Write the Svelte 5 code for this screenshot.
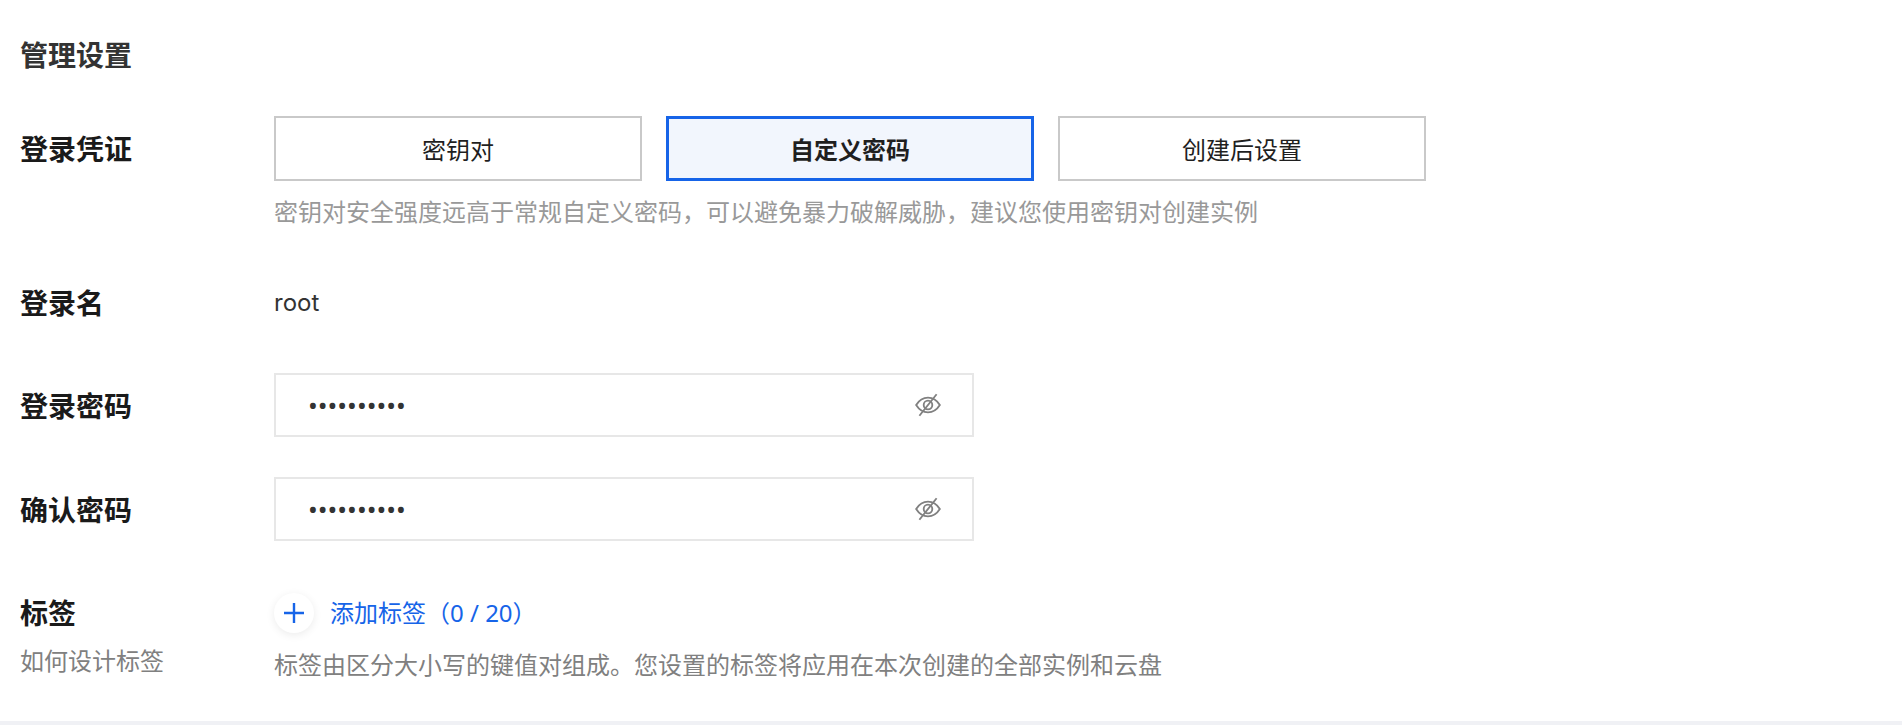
<script lang="ts">
	const credentials = ['密钥对', '自定义密码', '创建后设置'];
	let selected = $state(1);
	let passwords = $state(['1234567890', '1234567890']);
	const passwordRows = ['登录密码', '确认密码'];
</script>

<div class="page">
	<section class="panel">
		<h2 class="title">管理设置</h2>

		<div class="row row-credential">
			<div class="label">登录凭证</div>
			<div class="field">
				<div class="options">
					{#each credentials as option, i}
						<button class="option" class:active={selected === i} onclick={() => (selected = i)}>{option}</button>
					{/each}
				</div>
				<p class="hint">密钥对安全强度远高于常规自定义密码，可以避免暴力破解威胁，建议您使用密钥对创建实例</p>
			</div>
		</div>

		<div class="row row-name">
			<div class="label">登录名</div>
			<div class="field value">root</div>
		</div>

		{#each passwordRows as label, i}
			<div class="row row-password">
				<div class="label">{label}</div>
				<div class="field">
					<div class="input-box">
						<input type="password" bind:value={passwords[i]} aria-label={label} />
						<svg class="eye" width="28" height="28" viewBox="0 0 26 26" fill="none" stroke="currentColor" stroke-width="1.7">
							<path d="M2 13 C5 8.2 8.8 6.2 13 6.2 C17.2 6.2 21 8.2 24 13 C21 17.8 17.2 19.8 13 19.8 C8.8 19.8 5 17.8 2 13 Z" />
							<circle cx="13" cy="13" r="4" />
							<path d="M21 3 L5 23" />
						</svg>
					</div>
				</div>
			</div>
		{/each}

		<div class="row row-tags">
			<div class="label-stack">
				<div class="label">标签</div>
				<div class="label-link">如何设计标签</div>
			</div>
			<div class="field">
				<div class="add-tag">
					<span class="plus">
						<svg width="24" height="24" viewBox="0 0 24 24" fill="none" stroke="currentColor" stroke-width="2.4">
							<path d="M12 2 V22 M2 12 H22" />
						</svg>
					</span>
					<span class="add-text">添加标签（0 / 20）</span>
				</div>
				<p class="hint hint-tags">标签由区分大小写的键值对组成。您设置的标签将应用在本次创建的全部实例和云盘</p>
			</div>
		</div>
	</section>
	<div class="strip"></div>
</div>

<style>
	:global(body) {
		background: #fff;
	}

	.page {
		height: 725px;
		display: flex;
		flex-direction: column;
		overflow: hidden;
		font-family: 'Noto Sans', 'Noto Sans CJK SC', sans-serif;
		font-size: 24px;
		color: #1f1f1f;
	}

	.panel {
		flex: 1;
		padding: 35px 20px 0;
	}

	.strip {
		height: 4px;
		background: #f0f1f5;
	}

	.title {
		margin: 0;
		font-size: 28px;
		line-height: 40px;
		font-weight: 700;
		color: #333;
	}

	.row {
		display: flex;
	}

	.row-credential {
		margin-top: 41px;
	}

	.row-name {
		margin-top: 55px;
	}

	.row-password {
		margin-top: 40px;
	}

	.row-name + .row-password {
		margin-top: 50px;
	}

	.row-tags {
		margin-top: 52px;
	}

	.label {
		font-size: 28px;
		line-height: 40px;
		font-weight: 700;
		color: #1a1a1a;
	}

	.row > .label {
		width: 254px;
		flex-shrink: 0;
		padding-top: 13px;
	}

	.row-name > .label {
		padding-top: 0;
	}

	.label-stack {
		width: 254px;
		flex-shrink: 0;
	}

	.label-link {
		margin-top: 10px;
		line-height: 36px;
		color: #808080;
	}

	.options {
		display: flex;
		gap: 24px;
	}

	.option {
		width: 368px;
		height: 65px;
		box-sizing: border-box;
		padding: 0;
		background: #fff;
		border: 2px solid #c9c9c9;
		font: inherit;
		color: #1f1f1f;
		cursor: pointer;
	}

	.option.active {
		border: 3px solid #1664e8;
		background: #f2f6fd;
		font-weight: 700;
	}

	.hint {
		margin: 15px 0 0;
		line-height: 32px;
		color: #999;
	}

	.hint-tags {
		margin-top: 16px;
		color: #808080;
	}

	.value {
		line-height: 40px;
		font-family: Inter, sans-serif;
		color: #333;
	}

	.input-box {
		width: 700px;
		height: 64px;
		box-sizing: border-box;
		display: flex;
		align-items: center;
		padding: 0 30px 0 32px;
		border: 2px solid #e7e7e7;
		background: #fff;
	}

	.input-box input {
		flex: 1;
		min-width: 0;
		border: none;
		outline: none;
		padding: 0;
		background: transparent;
		font: inherit;
		font-size: 26px;
		color: #333;
	}

	.eye {
		color: #808080;
		flex-shrink: 0;
	}

	.add-tag {
		display: flex;
		align-items: center;
		gap: 16px;
		height: 40px;
		color: #1664e8;
	}

	.add-text {
		margin-top: -4px;
	}

	.plus {
		width: 40px;
		height: 40px;
		border-radius: 50%;
		display: flex;
		align-items: center;
		justify-content: center;
		background: #fff;
		box-shadow: 0 2px 8px rgba(0, 0, 0, 0.08);
	}
</style>
